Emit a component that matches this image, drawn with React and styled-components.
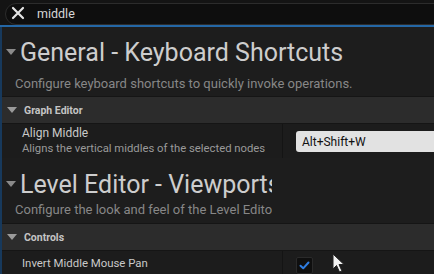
import styled, { createGlobalStyle } from "styled-components";

const GlobalStyle = createGlobalStyle`
  html, body {
    margin: 0;
    padding: 0;
    background: #151515;
    overflow: hidden;
  }
  body {
    font-family: Roboto, "Noto Sans", sans-serif;
  }
`;

const Page = styled.div`
  width: 434px;
  height: 274px;
  overflow: hidden;
  display: flex;
  flex-direction: column;
  background: #151515;
`;

const SearchArea = styled.div`
  height: 25px;
  padding: 3px 0 0 5px;
  box-sizing: border-box;
  background: #141414;
  display: flex;
`;

const SearchPill = styled.div`
  flex: 1;
  margin-right: -20px;
  height: 22px;
  border: 1px solid #2c2c2c;
  border-radius: 11px 0 0 11px;
  background: #0e0e0e;
  display: flex;
  align-items: center;
  gap: 12px;
  padding: 0 0 2px 5px;
  box-sizing: border-box;
`;

const SearchText = styled.span`
  color: #d6d6d6;
  font-size: 12.5px;
`;

const Spacer = styled.div`
  height: 5px;
  background: #1b1b1b;
  border-bottom: 2px solid #2467a6;
`;

const Content = styled.div`
  flex: 1;
  background: #1d1d1d;
  border-left: 2px solid #17395c;
`;

const SectionHead = styled.div`
  max-width: ${(p) => p.$clip || 440}px;
  overflow: hidden;
  white-space: nowrap;
  padding: ${(p) => p.$pad} 0 0 4px;
`;

const Heading = styled.div`
  display: flex;
  align-items: center;
  gap: 4px;
  color: #cdcdcd;
  font-size: 25px;
  height: 36px;

  svg {
    flex-shrink: 0;
  }
`;

const Description = styled.div`
  color: #878787;
  font-size: 13px;
  padding: ${(p) => p.$pad}px 0 0 9px;
  height: ${(p) => p.$h}px;
`;

const Band = styled.div`
  height: 26px;
  background: #2c2c2c;
  border-top: 1px solid #151515;
  border-bottom: 1px solid #151515;
  display: flex;
  align-items: center;
  gap: 7px;
  padding-left: 5px;
  color: #c4c4c4;
  font-size: 10.5px;
  font-weight: bold;
`;

const Row = styled.div`
  display: grid;
  grid-template-columns: 281px 1fr;
  height: ${(p) => p.$h}px;
  background: #1c1c1c;
`;

const NameCell = styled.div`
  border-right: 1px solid #141414;
  padding: ${(p) => p.$pad} 0 0 20px;
  white-space: nowrap;
  overflow: hidden;
`;

const Title = styled.div`
  color: #c9c9c9;
  font-size: ${(p) => p.$size || 12}px;
`;

const Hint = styled.div`
  color: #9a9a9a;
  font-size: 11.3px;
  margin-top: 2px;
`;

const ValueCell = styled.div`
  display: flex;
  align-items: flex-start;
  padding-top: ${(p) => p.$pad};
  padding-left: 13px;
  position: relative;
`;

const KeyInput = styled.div`
  flex: 1;
  margin-right: -10px;
  height: 21px;
  background: #e2e2e2;
  border-radius: 3px 0 0 3px;
  color: #111;
  font-size: 12px;
  display: flex;
  align-items: center;
  padding-left: 6px;
`;

const Check = styled.div`
  width: 17px;
  height: 17px;
  border-radius: 2px;
  background: #0f0f0f;
  border: 1px solid #2a2a2a;
  box-sizing: border-box;
  display: flex;
  align-items: center;
  justify-content: center;
`;

const Cursor = styled.svg`
  position: absolute;
  left: 49px;
  top: 2px;
`;

const Arrow = ({ size = 8, color = "#8a8a8a" }) => (
  <svg width={size} height={size * 0.6} viewBox="0 0 10 6">
    <path d="M0 0 L10 0 L5 6 Z" fill={color} />
  </svg>
);

export default function App() {
  return (
    <Page>
      <GlobalStyle />
      <SearchArea>
        <SearchPill>
          <svg width="14" height="14" viewBox="0 0 14 14">
            <path d="M2 2 L12 12 M12 2 L2 12" stroke="#e4e4e4" strokeWidth="2.2" strokeLinecap="round" />
          </svg>
          <SearchText>middle</SearchText>
        </SearchPill>
      </SearchArea>
      <Spacer />
      <Content>
        <SectionHead $pad="7px">
          <Heading>
            <Arrow size={10} />
            General - Keyboard Shortcuts
          </Heading>
          <Description $pad={6} $h={20}>
            Configure keyboard shortcuts to quickly invoke operations.
          </Description>
        </SectionHead>
        <Band>
          <Arrow size={10} color="#9a9a9a" />
          Graph Editor
        </Band>
        <Row $h={34}>
          <NameCell $pad="2px">
            <Title>Align Middle</Title>
            <Hint>Aligns the vertical middles of the selected nodes</Hint>
          </NameCell>
          <ValueCell $pad="7px">
            <KeyInput>Alt+Shift+W</KeyInput>
          </ValueCell>
        </Row>
        <SectionHead $clip={266} $pad="8px">
          <Heading>
            <Arrow size={10} />
            Level Editor - Viewports
          </Heading>
          <Description $pad={0} $h={21}>
            Configure the look and feel of the Level Editor
          </Description>
        </SectionHead>
        <Band>
          <Arrow size={10} color="#9a9a9a" />
          Controls
        </Band>
        <Row $h={30}>
          <NameCell $pad="5px">
            <Title $size={11.4}>Invert Middle Mouse Pan</Title>
          </NameCell>
          <ValueCell $pad="6px">
            <Check>
              <svg width="11" height="9" viewBox="0 0 11 9">
                <path d="M1.5 4.8 L4.2 7.3 L9.5 1.5" stroke="#2f7de1" strokeWidth="2" fill="none" strokeLinecap="round" strokeLinejoin="round" />
              </svg>
            </Check>
            <Cursor width="14" height="20" viewBox="0 0 14 20">
              <path d="M1 1 L1 16 L4.5 12.5 L7.5 19 L10 18 L7 11.5 L12 11.5 Z" fill="#f2f2f2" stroke="#222" strokeWidth="1" />
            </Cursor>
          </ValueCell>
        </Row>
      </Content>
    </Page>
  );
}
